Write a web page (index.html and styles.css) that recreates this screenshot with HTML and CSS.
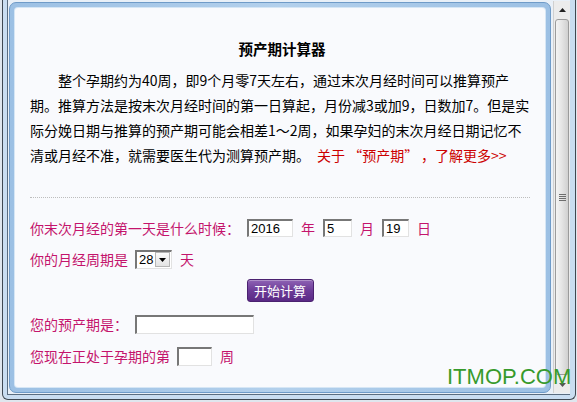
FILE: index.html
```
<!DOCTYPE html>
<html lang="zh-CN">
<head>
<meta charset="utf-8">
<title>预产期计算器</title>
<link rel="stylesheet" href="styles.css">
</head>
<body>
<div class="window">
  <div class="chrome">
    <div class="view">
      <div class="page-frame">
        <div class="page">
          <h1 class="title">预产期计算器</h1>
          <p class="intro">整个孕期约为40周，即9个月零7天左右，通过末次月经时间可以推算预产期。推算方法是按末次月经时间的第一日算起，月份减3或加9，日数加7。但是实际分娩日期与推算的预产期可能会相差1～2周，如果孕妇的末次月经日期记忆不清或月经不准，就需要医生代为测算预产期。<a href="#">关于 “预产期”&thinsp;，了解更多&gt;&gt;</a></p>
          <div class="rule"></div>
          <div class="row first">
            <span class="label">你末次月经的第一天是什么时候：</span>
            <input class="field year" type="text" value="2016">
            <span class="unit">年</span>
            <input class="field month" type="text" value="5">
            <span class="unit">月</span>
            <input class="field day" type="text" value="19">
            <span class="unit">日</span>
          </div>
          <div class="row">
            <span class="label">你的月经周期是</span>
            <span class="select"><span class="select-value">28</span><span class="select-btn"><svg width="7" height="4" viewBox="0 0 7 4"><path d="M0 0H7L3.5 4Z" fill="#000"/></svg></span></span>
            <span class="unit">天</span>
          </div>
          <div class="actions">
            <button class="calc" type="button">开始计算</button>
          </div>
          <div class="row result">
            <span class="label">您的预产期是：</span>
            <input class="field due" type="text" value="">
          </div>
          <div class="row result">
            <span class="label">您现在正处于孕期的第</span>
            <input class="field week" type="text" value="">
            <span class="unit">周</span>
          </div>
        </div>
      </div>
      <div class="scrollbar">
        <div class="arrow up"><svg width="7" height="4" viewBox="0 0 7 4"><path d="M3.5 0L7 4H0Z" fill="#222"/></svg></div>
        <div class="thumb"><span class="grip"></span></div>
        <div class="arrow down"><svg width="7" height="4" viewBox="0 0 7 4"><path d="M0 0H7L3.5 4Z" fill="#555"/></svg></div>
      </div>
    </div>
  </div>
  <div class="watermark">ITMOP.COM</div>
</div>
</body>
</html>
```

FILE: styles.css
```
* { box-sizing: border-box; }

html, body {
  margin: 0;
  padding: 0;
}

body {
  width: 577px;
  height: 402px;
  overflow: hidden;
  background: #dfe6ee;
  font-family: "Noto Sans CJK SC", sans-serif;
}

/* outer window frame */
.window {
  position: relative;
  width: 577px;
  height: 402px;
  padding: 0 1px 2px 2px;
  background: #dfe6ee;
}

.chrome {
  height: 100%;
  border: 1px solid #3f4852;
  border-top: 0;
  border-radius: 0 0 6px 6px;
  background: #c9ddf1;
  padding: 0 5px 4px 4px;
}

.view {
  display: flex;
  height: 100%;
  border-left: 1px solid #5b6d80;
  border-bottom: 1px solid #5b6d80;
  background: #e9f0f8;
  padding-left: 1px;
}

/* rounded blue panel holding the calculator */
.page-frame {
  width: 542px;
  height: 391px;
  margin-top: 2px;
  border: 1px solid #6f9bc8;
  border-radius: 7px;
  padding: 5px;
  background: linear-gradient(90deg, #9cc0e4, #b3d0ec 50%, #9cc0e4);
}

.page {
  height: 100%;
  background: #f9fafd;
  border-radius: 3px;
  box-shadow: 0 0 0 1px #d6e6f5;
  padding: 31px 0 0 15px;
}

.title {
  width: 504px;
  margin: 0;
  text-align: center;
  font-size: 14.5px;
  font-weight: bold;
  line-height: 20px;
  color: #000;
}

.intro {
  width: 502px;
  margin: 9px 0 0;
  font-size: 14px;
  line-height: 25px;
  text-indent: 28px;
  color: #000;
}

.intro a {
  margin-left: 7px;
  color: #cc0000;
  text-decoration: none;
}

.rule {
  width: 500px;
  margin-top: 29px;
  border-top: 1px dotted #bdbdbd;
}

/* form rows */
.row {
  display: flex;
  align-items: center;
  height: 20px;
  margin-top: 11px;
  font-size: 14px;
  line-height: 20px;
  color: #c4146c;
}

.row.first { margin-top: 20px; }

.row.result { margin-top: 12px; }

.label { margin-right: 7px; }

.unit { margin: 0 8px; }

.field {
  height: 18px;
  margin: 0;
  padding: 0 2px;
  border-style: solid;
  border-width: 2px 1px 1px 2px;
  border-color: #777 #e2e2e2 #e2e2e2 #777;
  background: #fff;
  font-family: "Liberation Sans", sans-serif;
  font-size: 13px;
  color: #000;
  outline: none;
}

.year { width: 46px; }
.month { width: 29px; }
.day { width: 27px; }
.due { width: 119px; height: 19px; }
.week { width: 35px; height: 19px; }

.select {
  display: flex;
  align-items: center;
  width: 37px;
  height: 19px;
  border-style: solid;
  border-width: 2px 1px 1px 2px;
  border-color: #777 #e2e2e2 #e2e2e2 #777;
  background: #fff;
  padding: 0 1px 0 2px;
}

.select-value {
  flex: 1;
  font-family: "Liberation Sans", sans-serif;
  font-size: 13px;
  line-height: 15px;
  color: #000;
}

.select-btn {
  display: flex;
  align-items: center;
  justify-content: center;
  width: 15px;
  height: 15px;
  border: 1px solid #b5b5b5;
  background: linear-gradient(#fbfbfb, #e3e3e3);
}

.actions {
  display: flex;
  justify-content: center;
  width: 500px;
  margin-top: 10px;
}

.calc {
  width: 67px;
  height: 23px;
  margin: 0;
  padding: 0;
  border: 1px solid #4b2170;
  border-radius: 3px;
  background: linear-gradient(#8e62b4, #6d3c98 50%, #5a2985);
  box-shadow: inset 0 1px 0 rgba(255, 255, 255, 0.3);
  color: #fff;
  font-family: "Noto Sans CJK SC", sans-serif;
  font-size: 13px;
  line-height: 21px;
}

/* vertical scrollbar */
.scrollbar {
  display: flex;
  flex-direction: column;
  width: 17px;
  height: 392px;
  margin-left: 2px;
  margin-top: 1px;
  background: #ececec;
  border-left: 1px solid #d0d0d0;
}

.arrow {
  display: flex;
  align-items: center;
  justify-content: center;
  height: 17px;
}

.thumb {
  flex: 1;
  display: flex;
  align-items: center;
  justify-content: center;
  margin: 1px 1px;
  border: 1px solid #9b9b9b;
  border-radius: 3px;
  background: linear-gradient(90deg, #f4f4f4, #e6e6e6 45%, #d0d0d0);
}

.grip {
  width: 7px;
  height: 7px;
  background: repeating-linear-gradient(#6e6e6e 0 1px, transparent 1px 2px);
}

.watermark {
  position: absolute;
  left: 447px;
  top: 366px;
  font-family: "Liberation Sans", sans-serif;
  font-size: 22px;
  line-height: 22px;
  color: #379a2c;
}
```
